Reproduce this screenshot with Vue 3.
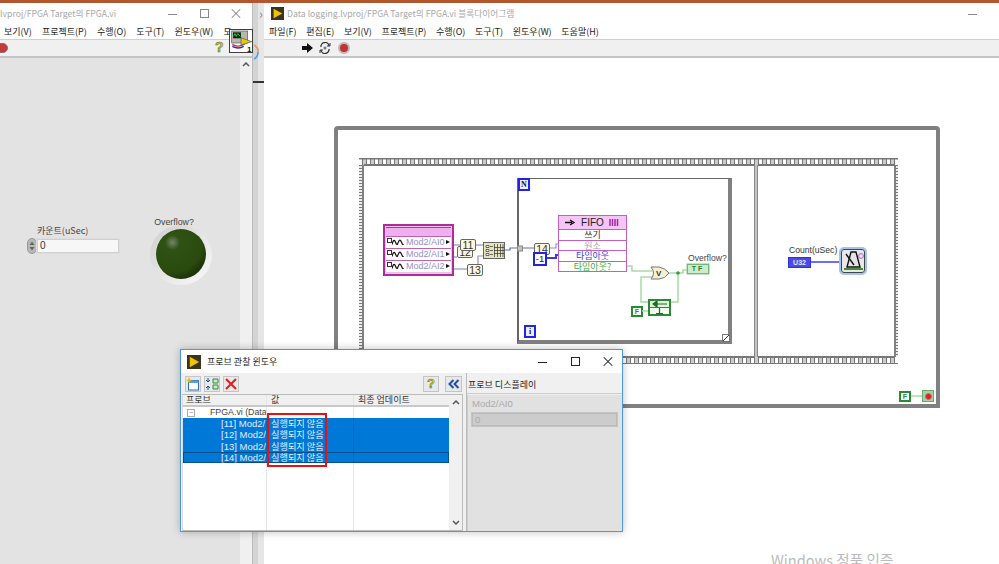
<script setup>
const menuL = ['보기(V)', '프로젝트(P)', '수행(O)', '도구(T)', '윈도우(W)', '도']
const menuR = ['파일(F)', '편집(E)', '보기(V)', '프로젝트(P)', '수행(O)', '도구(T)', '윈도우(W)', '도움말(H)']
const probes = ['[11] Mod2/', '[12] Mod2/', '[13] Mod2/', '[14] Mod2/']
const wires = [
  ['M454 245H460', '#8f8fc8', 1.2], ['M454 257H457', '#8f8fc8', 1.2], ['M454 269H467', '#8f8fc8', 1.2],
  ['M476 245H483', '#8f8fc8', 1.2], ['M478 264V256H483', '#8f8fc8', 1.2],
  ['M505 250H510V248H534', '#6a6ab8', 1.2], ['M550 248H556V244H558', '#8f8fc8', 1.2], ['M546 258H556V255H558', '#3c3cd8', 2],
  ['M627 266H632V271H652', '#a8dca8', 1.5], ['M653 277H641V302H648', '#a8dca8', 1.5], ['M669 273H678V302H671', '#a8dca8', 1.5],
  ['M678 273H683V270H687', '#a8dca8', 1.5], ['M642 311H648', '#a8dca8', 1.5], ['M811 262H839', '#3030f0', 1.4], ['M911 396H922', '#a8dca8', 1.5],
]
const lines = ['쓰기', '원소', '타임아웃', '타임아웃?']
const lineColors = ['#333', '#aaa', '#3a3ae0', '#46a84e']
</script>

<template>
  <div class="desk">
    <div class="topstrip"></div>

    <section class="win left">
      <header class="title">
        <span class="title-text">lvproj/FPGA Target의 FPGA.vi</span>
        <span class="caps"><i class="min"></i><i class="max"></i><i class="close"></i></span>
      </header>
      <nav class="menu"><span v-for="m in menuL" :key="m">{{ m }}</span></nav>
      <div class="tools">
        <i class="stopbtn"></i>
        <b class="help">?</b>
      </div>
      <div class="front">
        <div class="numctl">
          <label>카운트(uSec)</label>
          <div class="numrow">
            <svg class="spin" width="10" height="16" viewBox="0 0 10 16"><rect x=".5" y=".5" width="9" height="15" rx="4.5" fill="#b8b8b8" stroke="#999" /><path d="M2.5 7L5 3.5L7.5 7ZM2.5 9L5 12.5L7.5 9Z" fill="#666" /></svg>
            <span class="numbox">0</span>
          </div>
        </div>
        <div class="led">
          <label>Overflow?</label>
          <div class="ledring"><div class="ledcore"></div></div>
        </div>
        <div class="lscroll"><svg width="8" height="6" viewBox="0 0 8 6"><path d="M1 5L4 2L7 5" fill="none" stroke="#555" stroke-width="1.5" /></svg></div>
      </div>
      <svg class="vi-icon" width="24" height="24" viewBox="0 0 36 36">
        <rect x=".7" y=".7" width="34.6" height="34.6" fill="#fff" stroke="#333" stroke-width="1.4" />
        <rect x="4" y="3" width="24" height="18" fill="#b8b8b0" stroke="#555" />
        <rect x="6" y="5" width="12" height="9" fill="#102a10" />
        <path d="M7 11L9 7L11 11L13 7L17 11" fill="none" stroke="#5f5" />
        <path d="M5 23Q14 29 24 22" fill="none" stroke="#c33" stroke-width="2" />
        <path d="M5 26Q14 31 22 26" fill="none" stroke="#22c" stroke-width="2" />
        <path d="M18 13L34 19L18 24Z" fill="#e8c800" stroke="#555" />
        <text x="27" y="34" class="icon-n">1</text>
      </svg>
    </section>

    <div class="gutter">
      <span class="chev">›</span>
      <svg class="arc" width="7" height="16" viewBox="0 0 7 16"><path d="M1 1Q6 4 5 8" fill="none" stroke="#e09a70" stroke-width="1.6" /><path d="M5 8Q5 13 1 15" fill="none" stroke="#5a9ae0" stroke-width="1.6" /></svg>
      <i class="gline"></i>
    </div>

    <section class="win right">
      <header class="title">
        <svg class="lv" width="13" height="13" viewBox="0 0 15 15"><rect width="15" height="15" fill="#3a3320" /><path d="M3 2L13 7.5L3 13Z" fill="#f0c400" /></svg>
        <span class="title-text">Data logging.lvproj/FPGA Target의 FPGA.vi 블록다이어그램</span>
        <span class="caps"><i class="min"></i></span>
      </header>
      <nav class="menu"><span v-for="m in menuR" :key="m">{{ m }}</span></nav>
      <div class="tools rtools">
        <svg width="11" height="10" viewBox="0 0 11 10"><path d="M0 3H5V0L11 5L5 10V7H0Z" fill="#111" /></svg>
        <svg width="12" height="12" viewBox="0 0 12 12"><path d="M2 5A4 4 0 0 1 10 4M10 7A4 4 0 0 1 2 8" fill="none" stroke="#333" stroke-width="1.3" /><path d="M8 4H11V1M4 8H1V11" fill="none" stroke="#333" /><circle cx="6" cy="6" r="1.5" fill="#777" /></svg>
        <i class="stopbtn small"></i>
      </div>
      <div class="canvas"></div>
    </section>

    <!-- block diagram: nodes on a free canvas -->
    <div class="diagram">
      <div class="while"></div>
      <div class="film">
        <div class="pane p1"></div>
        <div class="divider"></div>
        <div class="pane p2"></div>
      </div>
      <div class="forloop"></div>
      <span class="loop-n">N</span>
      <span class="loop-i">i</span>
      <span class="grip"></span>

      <svg class="wires" width="999" height="564" viewBox="0 0 999 564">
        <path v-for="w in wires" :key="w[0]" :d="w[0]" :stroke="w[1]" :stroke-width="w[2]" fill="none" />
        <circle cx="678" cy="273" r="1.8" fill="#2e9e3e" />
        <path d="M651 267H659Q665 268 669 273Q665 279 659 279H651Q656 273 651 267Z" fill="#f7f0d0" stroke="#777" />
        <text x="656" y="276" class="or">V</text>
        <rect x="483.5" y="242.5" width="21" height="16" fill="#e6e4bb" stroke="#666" />
        <path d="M486 245.5h3v2h-3zM486 249.5h3v2h-3zM486 253.5h3v2h-3z" fill="#fff" stroke="#333" stroke-width=".7" />
        <path d="M490 246.5h3M490 250.5h3M490 254.5h3M494.5 244v13M497.5 244v13M500.5 244v13M503 244v13M494 247.5h10M494 250.5h10M494 253.5h10" stroke="#333" stroke-width=".7" fill="none" />
        <rect x="517.5" y="246" width="5" height="5" fill="#c4c4a8" stroke="#888" />
      </svg>

      <div class="fpgaio">
        <div class="io-head"></div>
        <div class="io-row" v-for="n in 3" :key="n"><i class="corner"></i><svg width="12" height="6" viewBox="0 0 14 6"><path d="M0 6Q2 -2 4 3T7 4Q9 -2 11 3T14 6" fill="none" stroke="#111" stroke-width="1.4" /></svg><span>Mod2/AI{{ n - 1 }}</span><i class="tri"></i></div>
      </div>

      <span class="probe p12">12</span>
      <span class="probe p11">11</span>
      <span class="probe p13">13</span>
      <span class="probe p14">14</span>
      <span class="const">-1</span>

      <div class="fifo">
        <div class="fifo-head"><svg width="11" height="7" viewBox="0 0 11 7"><path d="M0 3.5H7M5 1L9 3.5L5 6" fill="none" stroke="#111" stroke-width="1.3" /></svg><span>FIFO</span><svg width="11" height="7" viewBox="0 0 11 7"><path d="M1 0v7M3.5 0v7M6 0v7M8.5 0v7" stroke="#a02aa0" stroke-width="1.5" /></svg></div>
        <div class="fifo-line" v-for="(l, i) in lines" :key="l" :style="{ color: lineColors[i] }">{{ l }}</div>
      </div>

      <span class="ovlabel">Overflow?</span>
      <span class="tf">TF</span>
      <span class="fbox f1">F</span>
      <span class="fbox f2">F</span>
      <div class="feedback">
        <span class="fb-top"><svg width="15" height="6" viewBox="0 0 15 6"><path d="M15 3H3M5 0L1 3L5 6Z" stroke="#1a6a24" stroke-width="1.2" fill="#1a6a24" /></svg></span>
        <span class="fb-low"><svg width="7" height="6" viewBox="0 0 7 6"><path d="M3.5 0V5M0 5.5H7" stroke="#1a6a24" stroke-width="1.2" /></svg></span>
      </div>

      <span class="countlabel">Count(uSec)</span>
      <span class="u32">U32</span>
      <div class="wait">
        <svg width="20" height="21" viewBox="0 0 20 21">
          <path d="M7 2H12L16 17H3Z" fill="#e4e4e4" stroke="#111" stroke-width="1.4" />
          <path d="M2 4L10 15" stroke="#111" stroke-width="1.4" />
          <path d="M0 19H19" stroke="#4a8a3c" stroke-width="2" />
          <circle cx="17" cy="6" r="2.4" fill="none" stroke="#b060c8" />
        </svg>
      </div>
      <div class="stopterm"><i></i></div>
    </div>

    <section class="probewin">
      <header class="ptitle">
        <svg class="lv" width="14" height="14" viewBox="0 0 15 15"><rect width="15" height="15" fill="#3a3320" /><path d="M3 2L13 7.5L3 13Z" fill="#f0c400" /></svg>
        <span>프로브 관찰 윈도우</span>
        <span class="caps pcaps"><i class="min"></i><i class="max"></i><i class="close"></i></span>
      </header>
      <div class="pbody">
        <div class="pleft">
          <div class="ptools">
            <span class="tbtn"><svg width="14" height="14" viewBox="0 0 14 14"><rect x="2.5" y="3.5" width="10" height="9.5" fill="#fff" stroke="#2a6ab0" /><rect x="2.5" y="3.5" width="10" height="2.5" fill="#5aa0dc" /><path d="M3 0L4 2.5L7 3L4 4L3 6L2 4L0 3L2 2.5Z" fill="#e6c000" /></svg></span>
            <span class="tbtn"><svg width="14" height="14" viewBox="0 0 14 14"><path d="M3 1V5M1 3L3 5L5 3M3 13V9M1 11L3 9L5 11" stroke="#1a4aa0" fill="none" /><path d="M8 2H13V6H8ZM8 8H13V12H8Z" fill="#cfe8c8" stroke="#2e8a3e" /></svg></span>
            <span class="tbtn"><svg width="14" height="14" viewBox="0 0 14 14"><path d="M2 2L12 12M12 2L2 12" stroke="#e02020" stroke-width="2" /></svg></span>
            <span class="spacer"></span>
            <span class="tbtn help2">?</span>
            <span class="tbtn dbl"><svg width="12" height="10" viewBox="0 0 12 10"><path d="M5.5 1L1.5 5L5.5 9M10.5 1L6.5 5L10.5 9" fill="none" stroke="#1f4fa8" stroke-width="2" /></svg></span>
          </div>
          <div class="ptable">
            <div class="phead"><span class="c1">프로브</span><span class="c2">값</span><span class="c3">최종 업데이트</span></div>
            <div class="prow group"><span class="c1"><i class="tree">−</i>FPGA.vi (Data</span><span class="c2"></span><span class="c3"></span></div>
            <div class="prow sel" :class="{ focus: i === 3 }" v-for="(p, i) in probes" :key="p"><span class="c1 indent">{{ p }}</span><span class="c2">실행되지 않음</span><span class="c3"></span></div>
            <div class="pfill"><span class="c1"></span><span class="c2"></span><span class="c3"></span></div>
            <div class="redbox"></div>
            <div class="pscroll">
              <svg width="8" height="6" viewBox="0 0 8 6"><path d="M1 5L4 2L7 5" fill="none" stroke="#555" stroke-width="1.5" /></svg>
              <svg width="8" height="6" viewBox="0 0 8 6"><path d="M1 1L4 4L7 1" fill="none" stroke="#555" stroke-width="1.5" /></svg>
            </div>
          </div>
        </div>
        <aside class="pright">
          <div class="pr-head">프로브 디스플레이</div>
          <div class="pr-body">
            <div class="pr-label">Mod2/AI0</div>
            <div class="pr-val">0</div>
          </div>
        </aside>
      </div>
    </section>

    <div class="watermark">Windows 정품 인증</div>
  </div>
</template>

<style>
body { margin: 0; overflow: hidden; }
</style>

<style scoped>
.desk { position: relative; width: 999px; height: 564px; overflow: hidden; background: #fff; display: flex; font-family: "Noto Sans CJK KR", "Noto Sans", sans-serif; color: #333; padding-top: 3px; box-sizing: border-box; }
.topstrip { position: absolute; left: 0; top: 0; width: 100%; height: 3px; background: #b2562e; }
.win { display: flex; flex-direction: column; height: 100%; }
.left { width: 252px; position: relative; }
.gutter { width: 12px; position: relative; background: linear-gradient(90deg, #d4d4d4 0 5px, #e6e6e6 5px 11px, #bbb 11px); border-left: 1px solid #bbb; box-sizing: border-box; color: #888; font-size: 13px; line-height: 16px; padding: 3px 0 0 6px; }
.arc { position: absolute; left: 0; top: 41px; }
.gline { position: absolute; left: 0; right: 0; top: 78px; height: 1.5px; background: #333; }
.right { flex: 1; min-width: 0; }
.title { height: 21px; flex: none; display: flex; align-items: center; font-size: 8.7px; color: #a8a8a8; background: #fff; white-space: nowrap; }
.right .title { padding-left: 7px; gap: 3px; }
.caps { margin-left: auto; display: flex; }
.caps i { display: block; width: 46px; height: 20px; position: relative; }
.min::before { content: ""; position: absolute; left: 15px; top: 10px; width: 9px; height: 1px; background: #888; }
.max::before { content: ""; position: absolute; left: 15px; top: 5px; width: 7px; height: 7px; border: 1px solid #888; }
.close::before, .close::after { content: ""; position: absolute; left: 13px; top: 9px; width: 12px; height: 1px; background: #888; transform: rotate(45deg); }
.close::after { transform: rotate(-45deg); }
.left .caps i { width: 32px; }
.left .caps { margin-right: 3px; }
.menu { height: 16px; flex: none; box-sizing: border-box; display: flex; gap: 10.1px; font-size: 9px; line-height: 15px; padding-left: 4px; color: #222; background: #fff; white-space: nowrap; overflow: hidden; border-bottom: 1px solid #d0d0d0; }
.right .menu { padding-left: 5px; gap: 9.7px; }
.tools { height: 18px; box-sizing: border-box; flex: none; background: #f0f0f0; border-bottom: 2px solid #c4c4c4; display: flex; align-items: center; position: relative; }
.rtools { gap: 6px; padding-left: 38px; }
.stopbtn { position: absolute; left: -6px; top: 3px; width: 14px; height: 10px; border-radius: 5px; background: #c83838; border: 1px solid #777; box-sizing: border-box; }
.stopbtn.small { position: static; width: 12px; height: 12px; border-radius: 50%; margin-left: 1px; border: 2px solid #bbb; background: #c83030; }
.help { position: absolute; left: 215px; top: -1px; font: bold 14px/16px "Liberation Sans", sans-serif; color: #e8d400; -webkit-text-stroke: .5px #555; }
.front { flex: 1; background: #e3e3e3; position: relative; display: flex; justify-content: flex-end; }
.lscroll { width: 12px; background: #f0f0f0; display: flex; justify-content: center; padding-top: 3px; box-sizing: border-box; }
.numctl { position: absolute; left: 27px; top: 166px; }
.numctl label { display: block; font-size: 9px; line-height: 13px; padding-left: 10px; color: #444; }
.numrow { display: flex; align-items: center; margin-top: 1px; }
.spin { flex: none; }
.numbox { width: 82px; height: 14px; background: #f7f7f7; border: 1px solid #d0d0d0; box-sizing: border-box; font: 10px/12px "Liberation Sans", sans-serif; padding-left: 2px; box-shadow: 0 0 0 1px #ddd; }
.led { position: absolute; left: 150px; top: 159px; width: 62px; }
.led label { display: block; position: relative; left: -7px; font: 8.8px/11px "Liberation Sans", sans-serif; text-align: center; color: #444; z-index: 1; }
.ledring { width: 62px; height: 60px; border-radius: 50%; background: linear-gradient(135deg, #cfcfcf, #fafafa); display: flex; align-items: center; justify-content: center; margin-top: -3px; }
.ledcore { width: 50px; height: 50px; margin-top: -2px; border-radius: 50%; background: radial-gradient(circle at 33% 27%, #76846a 0, #2f5314 15%, #2a4a0e 60%, #0a1602 100%); }
.vi-icon { position: absolute; left: 229px; top: 26px; z-index: 2; }
.icon-n { font: bold 12px "Liberation Sans", sans-serif; fill: #111; }
.canvas { flex: 1; background: #fff; }
.lv { flex: none; }

.diagram { position: absolute; inset: 0; pointer-events: none; font-family: "Liberation Sans", sans-serif; }
.wires { position: absolute; left: 0; top: 0; z-index: 3; }
.or { font: bold 8px "Liberation Sans", sans-serif; fill: #333; }
.while { position: absolute; left: 334px; top: 126px; width: 606px; height: 282px; box-sizing: border-box; border: 4px solid #808080; border-radius: 4px 4px 0 0; }
.film { position: absolute; left: 359px; top: 158px; width: 539px; height: 206px; box-sizing: border-box; padding: 7px 4px 7px 5px; display: flex;
  background:
    linear-gradient(#777, #777) 0 0 / 100% 1.5px no-repeat,
    linear-gradient(#777, #777) 0 100% / 100% 1.5px no-repeat,
    repeating-linear-gradient(90deg, #fff 0 3px, #777 3px 4px, #ccc 4px 7px, #777 7px 8px) top / 100% 7px no-repeat,
    repeating-linear-gradient(90deg, #fff 0 3px, #777 3px 4px, #ccc 4px 7px, #777 7px 8px) bottom / 100% 7px no-repeat,
    repeating-linear-gradient(0deg, #777 0 1.5px, #eee 1.5px 3px) left / 3px 100% no-repeat,
    repeating-linear-gradient(0deg, #777 0 1.5px, #eee 1.5px 3px) right / 2px 100% no-repeat,
    #808080; }
.pane { background: #fff; border-top: 2px solid #808080; border-bottom: 2px solid #808080; }
.p1 { width: 390px; margin-top: -1px; margin-bottom: -1px; border-color: #777; }
.divider { width: 4px; background: #c4c4c4; border: solid #888; border-width: 0 1px; margin: 0; box-sizing: border-box; }
.p2 { flex: 1; margin-top: -1px; margin-bottom: -1px; border-color: #777; }
.forloop { position: absolute; left: 517px; top: 178px; width: 215px; height: 166px; box-sizing: border-box; border: 1px solid #666; border-left-width: 2px; border-right: 4px solid #808080; border-bottom: 4px solid #808080; background: #fff; }
.loop-n, .loop-i { position: absolute; width: 8px; height: 9px; border: 2px solid #2323e8; background: #eef; font: bold 8px/9px "Liberation Serif", serif; text-align: center; color: #114; }
.loop-n { left: 518px; top: 178px; }
.loop-i { left: 524px; top: 325px; }
.grip { position: absolute; left: 722px; top: 334px; width: 6px; height: 6px; border: 1px solid #777; background: linear-gradient(135deg, #fff 42%, #333 50%, #fff 58%); }
.fpgaio { position: absolute; left: 383px; top: 224px; width: 71px; height: 52px; box-sizing: border-box; border: 2px solid #b02c9c; padding: 1px; background: #e8c4e8; z-index: 2; }
.io-head { height: 9px; box-sizing: border-box; background: #f0b0f0; border-top: 1px solid #666; }
.io-row { height: 12px; box-sizing: border-box; background: #fff; position: relative; display: flex; align-items: center; gap: 2px; border-top: 1px solid #c060b0; font-size: 9px; line-height: 10px; color: #9090c8; padding: 0 0 1px 6px; white-space: nowrap; }
.corner { position: absolute; left: 1px; top: 1px; width: 3px; height: 3px; border: 1px solid #333; background: #fff; }
.tri { position: absolute; right: 1px; top: 3px; width: 0; height: 0; border-left: 4px solid #111; border-top: 2.5px solid transparent; border-bottom: 2.5px solid transparent; }
.probe { position: absolute; width: 14px; height: 10px; border: 1px solid #666; border-radius: 2px; background: #fbf8e0; font-size: 10.5px; line-height: 10px; text-align: center; color: #333; z-index: 4; box-sizing: content-box; }
.p12 { left: 457px; top: 246px; z-index: 3; }
.p11 { left: 460px; top: 239px; }
.p13 { left: 467px; top: 264px; }
.p14 { left: 534px; top: 243px; }
.const { position: absolute; left: 533px; top: 252px; width: 10px; height: 10px; border: 2px solid #2323e8; background: #fff; font-size: 9.5px; line-height: 10px; text-align: center; color: #222; z-index: 4; }
.fifo { position: absolute; left: 558px; top: 215px; width: 69px; height: 57px; box-sizing: border-box; border: 1px solid #c060c0; background: #fff; z-index: 4; font-family: "Noto Sans CJK KR", sans-serif; }
.fifo-head { height: 13px; background: #f6c4f6; font: 10px/13px "Liberation Sans", sans-serif; display: flex; align-items: center; justify-content: center; gap: 5px; white-space: nowrap; color: #222; }
.fifo-line { height: 10.5px; border-top: 1px solid #c060c0; font-size: 9px; line-height: 9.5px; text-align: center; box-sizing: border-box; white-space: nowrap; }
.ovlabel { position: absolute; left: 688px; top: 253px; font-size: 8.6px; line-height: 10px; color: #444; }
.tf { position: absolute; left: 687px; top: 264px; width: 20px; height: 8px; border: 1.5px solid #6cba74; background: #cfeacd; font: bold 7px/8px "Liberation Sans", sans-serif; text-align: center; letter-spacing: 2px; color: #2b7a34; box-shadow: 0 0 0 .5px #88c888; }
.fbox { position: absolute; width: 8px; height: 7px; border: 2px solid #2a8a34; background: #fff; font: bold 7px/7px "Liberation Sans", sans-serif; color: #2a8a34; text-align: center; }
.f1 { left: 631px; top: 306px; }
.f2 { left: 899px; top: 391px; }
.feedback { position: absolute; left: 648px; top: 299px; width: 19px; height: 13px; border: 2px solid #2a8a34; background: #e2f4dc; display: flex; flex-direction: column; z-index: 4; }
.fb-top, .fb-low { flex: 1; display: flex; align-items: center; justify-content: center; min-height: 0; }
.fb-low { border-top: 1px solid #2a8a34; background: #f2fbee; }
.countlabel { position: absolute; left: 789px; top: 245px; font-size: 8.6px; line-height: 10px; color: #333; }
.u32 { position: absolute; left: 788px; top: 257px; width: 21px; height: 9px; border: 1px solid #3030e0; background: #4a4aea; color: #e4e4ff; font: bold 7px/9px "Liberation Sans", sans-serif; text-align: center; z-index: 4; }
.wait { position: absolute; left: 839px; top: 247px; height: 23px; width: 21px; padding: 1px 0 0 3px; box-sizing: content-box; border: 2px solid #a4c4f0; border-radius: 5px; background: #e8e8e8; outline: 1px solid #444; outline-offset: -3px; z-index: 4; }
.stopterm { position: absolute; left: 922px; top: 390px; width: 10px; height: 10px; background: #a8d0a8; border: 1px solid #6ca86c; display: flex; align-items: center; justify-content: center; }
.stopterm i { width: 7px; height: 7px; border-radius: 50%; background: #f01818; border: 1px solid #888; box-sizing: border-box; }

.probewin { position: absolute; left: 180px; top: 349px; width: 443px; height: 183px; box-sizing: border-box; border: 1px solid #4a9adc; background: #fff; display: flex; flex-direction: column; box-shadow: 0 0 8px rgba(0,0,0,.25); z-index: 5; }
.ptitle { height: 23px; flex: none; display: flex; align-items: center; gap: 6px; font-size: 9px; padding-left: 6px; color: #222; }
.pcaps i { width: 33px; height: 20px; }
.pcaps { margin-right: 0; }
.pcaps .min::before, .pcaps .close::before, .pcaps .close::after { background: #222; }
.pcaps .max::before { border-color: #222; }
.pbody { flex: 1; display: flex; min-height: 0; background: #f0f0f0; padding-left: 1px; }
.pleft { width: 281px; flex: none; display: flex; flex-direction: column; }
.ptools { height: 21px; flex: none; display: flex; align-items: center; gap: 3px; padding: 0 1px 0 3px; }
.tbtn { width: 14px; height: 14px; border: 1px solid #c4c4c4; background: #e8e8e8; display: flex; align-items: center; justify-content: center; box-sizing: content-box; }
.spacer { flex: 1; }
.help2 { font: bold 13px "Liberation Sans", sans-serif; color: #e8d400; -webkit-text-stroke: .4px #555; margin-right: 3px; }
.dbl { width: 15px; }
.ptable { flex: 1; position: relative; background: #fff; border: 1px solid #bbb; border-left: 1px solid #ddd; padding-right: 13px; display: flex; flex-direction: column; }
.phead, .prow, .pfill { display: flex; }
.phead { height: 12px; box-sizing: border-box; background: #f0f0f0; border-bottom: 2px solid #c8c8c8; font-size: 9px; line-height: 10px; flex: none; }
.c1 { width: 84px; flex: none; box-sizing: border-box; padding-left: 3px; white-space: nowrap; overflow: hidden; border-right: 1px solid #e4e4e4; }
.c2 { width: 87px; flex: none; box-sizing: border-box; padding-left: 4px; white-space: nowrap; overflow: hidden; border-right: 1px solid #e4e4e4; }
.c3 { flex: 1; padding-left: 4px; white-space: nowrap; overflow: hidden; }
.phead .c1, .phead .c2, .phead .c3 { overflow: visible; }
.prow { height: 11.25px; flex: none; font-size: 9.2px; line-height: 11.25px; }
.group { height: 11px; font: 8.8px/11px "Liberation Sans", sans-serif; color: #444; }
.group .c1 { padding-left: 4px; }
.tree { display: inline-block; width: 6px; height: 6px; border: 1px solid #aaa; font: 7px/6px "Liberation Sans", sans-serif; text-align: center; color: #777; margin-right: 15px; vertical-align: 0; }
.sel { background: #0078d7; color: #e4eefc; }
.sel .c1, .sel .c2 { border-right-color: #0a68b8; }
.sel .indent { padding-left: 38px; font: 9.5px/11.25px "Liberation Sans", sans-serif; }
.focus { outline: 1px solid rgba(0,0,0,.35); outline-offset: -1px; }
.pfill { flex: 1; }
.redbox { position: absolute; left: 84px; top: 18px; width: 60px; height: 54px; border: 2px solid #e81010; box-sizing: border-box; }
.pscroll { position: absolute; right: 0; top: 0; bottom: 0; width: 13px; padding: 4px 0; box-sizing: border-box; background: #f0f0f0; display: flex; flex-direction: column; justify-content: space-between; align-items: center; }
.pright { flex: 1; display: flex; flex-direction: column; border-left: 1px solid #bbb; margin-left: 3px; }
.pr-head { height: 21px; flex: none; box-sizing: border-box; font-size: 9px; line-height: 24px; padding-left: 1px; border-bottom: 1px solid #ccc; color: #222; margin-bottom: 1px; }
.pr-body { flex: 1; background: #e1e1e1; padding: 2px 5px 0 4px; border-left: 1px solid #ccc; }
.pr-label { font: 9.5px/13px "Liberation Sans", sans-serif; color: #aaa; }
.pr-val { height: 11px; margin-top: 3px; background: #ccc; border: 1px solid #bbb; box-shadow: 0 0 0 1px #c4c4c4; font: 9.5px/11px "Liberation Sans", sans-serif; color: #aaa; padding-left: 2px; }
.watermark { position: absolute; left: 771px; top: 549px; font-size: 14.6px; color: #bbb; white-space: nowrap; z-index: 6; }
</style>
